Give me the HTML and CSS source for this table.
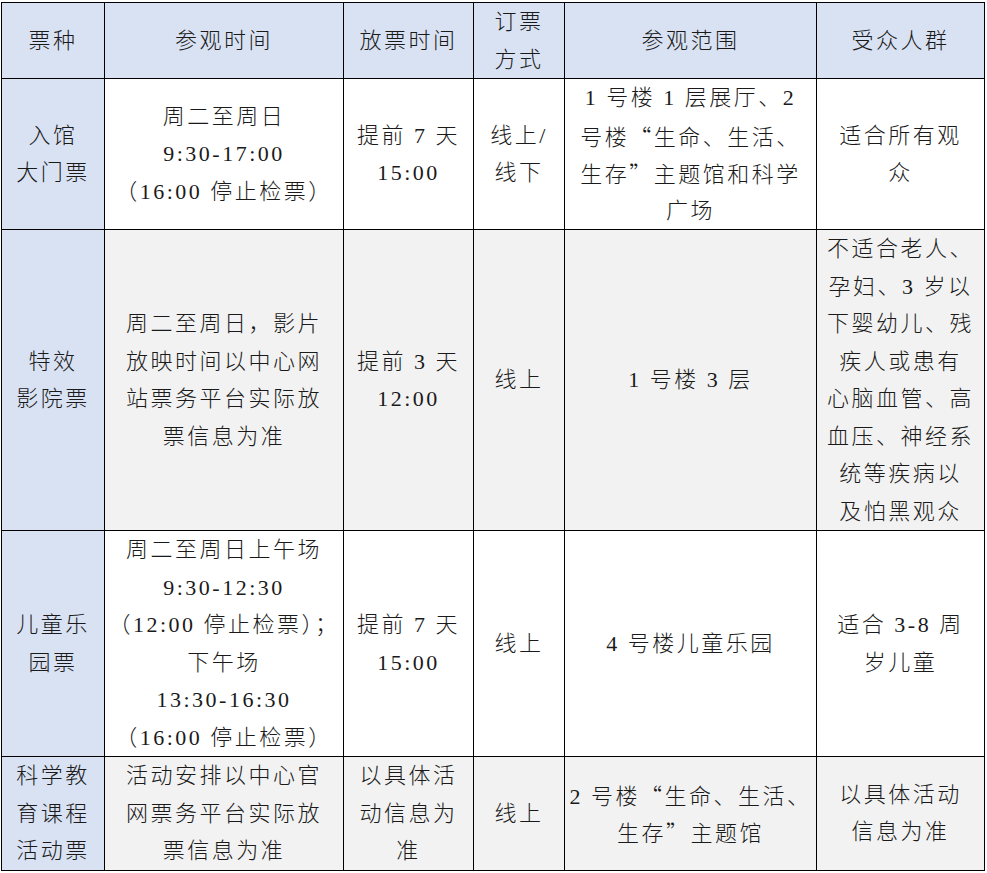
FILE: index.html
```html
<!DOCTYPE html>
<html lang="zh-CN">
<head>
<meta charset="utf-8">
<title>票种</title>
<link rel="stylesheet" href="styles.css">
</head>
<body>
<table class="tickets">
  <colgroup>
    <col class="c-type">
    <col class="c-time">
    <col class="c-release">
    <col class="c-mode">
    <col class="c-range">
    <col class="c-aud">
  </colgroup>
  <thead>
    <tr class="head">
      <th><span class="ln">票种</span></th>
      <th><span class="ln">参观时间</span></th>
      <th><span class="ln">放票时间</span></th>
      <th><span class="ln">订票</span><span class="ln">方式</span></th>
      <th><span class="ln">参观范围</span></th>
      <th><span class="ln">受众人群</span></th>
    </tr>
  </thead>
  <tbody>
    <tr class="r-white">
      <td class="type"><span class="ln">入馆</span><span class="ln">大门票</span></td>
      <td><span class="ln">周二至周日</span><span class="ln">9:30-17:00</span><span class="ln">（16:00 停止检票）</span></td>
      <td><span class="ln">提前 7 天</span><span class="ln">15:00</span></td>
      <td><span class="ln">线上/</span><span class="ln">线下</span></td>
      <td><span class="ln">1 号楼 1 层展厅、2</span><span class="ln">号楼<span class="q">“</span>生命、生活、</span><span class="ln">生存<span class="q">”</span>主题馆和科学</span><span class="ln">广场</span></td>
      <td><span class="ln">适合所有观</span><span class="ln">众</span></td>
    </tr>
    <tr class="r-gray">
      <td class="type"><span class="ln">特效</span><span class="ln">影院票</span></td>
      <td><span class="ln">周二至周日，影片</span><span class="ln">放映时间以中心网</span><span class="ln">站票务平台实际放</span><span class="ln">票信息为准</span></td>
      <td><span class="ln">提前 3 天</span><span class="ln">12:00</span></td>
      <td><span class="ln">线上</span></td>
      <td><span class="ln">1 号楼 3 层</span></td>
      <td><span class="ln">不适合老人、</span><span class="ln">孕妇、3 岁以</span><span class="ln">下婴幼儿、残</span><span class="ln">疾人或患有</span><span class="ln">心脑血管、高</span><span class="ln">血压、神经系</span><span class="ln">统等疾病以</span><span class="ln">及怕黑观众</span></td>
    </tr>
    <tr class="r-white">
      <td class="type"><span class="ln">儿童乐</span><span class="ln">园票</span></td>
      <td><span class="ln">周二至周日上午场</span><span class="ln">9:30-12:30</span><span class="ln">（12:00 停止检票）；</span><span class="ln">下午场</span><span class="ln">13:30-16:30</span><span class="ln">（16:00 停止检票）</span></td>
      <td><span class="ln">提前 7 天</span><span class="ln">15:00</span></td>
      <td><span class="ln">线上</span></td>
      <td><span class="ln">4 号楼儿童乐园</span></td>
      <td><span class="ln">适合 3-8 周</span><span class="ln">岁儿童</span></td>
    </tr>
    <tr class="r-gray">
      <td class="type"><span class="ln">科学教</span><span class="ln">育课程</span><span class="ln">活动票</span></td>
      <td><span class="ln">活动安排以中心官</span><span class="ln">网票务平台实际放</span><span class="ln">票信息为准</span></td>
      <td><span class="ln">以具体活</span><span class="ln">动信息为</span><span class="ln">准</span></td>
      <td><span class="ln">线上</span></td>
      <td><span class="ln">2 号楼<span class="q">“</span>生命、生活、</span><span class="ln">生存<span class="q">”</span>主题馆</span></td>
      <td><span class="ln">以具体活动</span><span class="ln">信息为准</span></td>
    </tr>
  </tbody>
</table>
</body>
</html>
```

FILE: styles.css
```css
html, body {
  margin: 0;
  padding: 0;
  background: #ffffff;
}

body {
  padding: 2px 0 0 1px;
}

.tickets {
  border-collapse: collapse;
  table-layout: fixed;
  width: 984px;
  font-family: "Liberation Serif", "Noto Sans CJK SC", serif;
  font-size: 22px;
  font-weight: 300;
  letter-spacing: 2.5px;
  line-height: 37.5px;
  color: #1a1a1a;
  border: 1px solid #000;
}

.c-type { width: 103px; }
.c-time { width: 239px; }
.c-release { width: 130px; }
.c-mode { width: 91px; }
.c-range { width: 252px; }
.c-aud { width: 168px; }

.tickets th,
.tickets td {
  border: 1px solid #000;
  padding: 0;
  text-align: center;
  vertical-align: middle;
  font-weight: 300;
  white-space: nowrap;
}

.ln {
  display: block;
  height: 37.5px;
  overflow: visible;
}

.head th {
  background: #d9e2f3;
}

.r-white td {
  background: #ffffff;
}

.r-gray td {
  background: #f2f2f2;
}

.tickets td.type {
  background: #d9e2f3;
}

.q {
  font-family: "Noto Sans CJK SC", sans-serif;
}
```
